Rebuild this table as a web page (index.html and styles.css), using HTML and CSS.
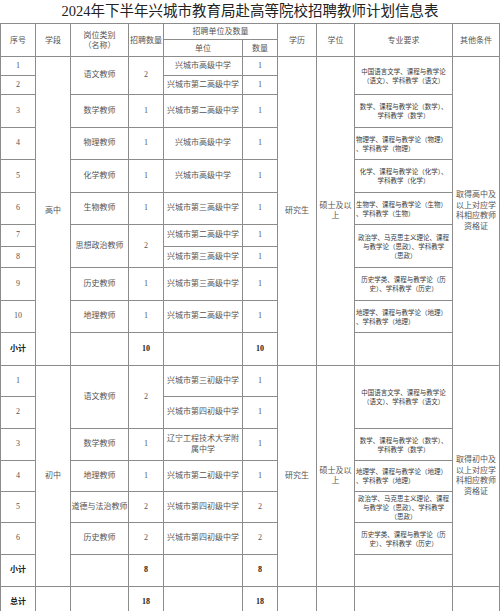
FILE: index.html
```html
<!DOCTYPE html>
<html lang="zh-CN">
<head>
<meta charset="utf-8">
<title>2024年下半年兴城市教育局赴高等院校招聘教师计划信息表</title>
<link rel="stylesheet" href="styles.css">
</head>
<body>
<div class="title">2024年下半年兴城市教育局赴高等院校招聘教师计划信息表</div>
<table class="plan">
  <colgroup>
    <col class="c-no"><col class="c-stage"><col class="c-post"><col class="c-num"><col class="c-unit"><col class="c-cnt"><col class="c-edu"><col class="c-deg"><col class="c-major"><col class="c-other">
  </colgroup>
  <thead>
    <tr class="h16">
      <th rowspan="2">序号</th>
      <th rowspan="2">学段</th>
      <th rowspan="2">岗位类别<br>（名称）</th>
      <th rowspan="2">招聘数量</th>
      <th colspan="2">招聘单位及数量</th>
      <th rowspan="2">学历</th>
      <th rowspan="2">学位</th>
      <th rowspan="2">专业要求</th>
      <th rowspan="2">其他条件</th>
    </tr>
    <tr class="h17">
      <th>单位</th>
      <th>数量</th>
    </tr>
  </thead>
  <tbody>
    <tr class="h19">
      <td>1</td>
      <td rowspan="11">高中</td>
      <td rowspan="2">语文教师</td>
      <td rowspan="2">2</td>
      <td>兴城市高级中学</td>
      <td>1</td>
      <td rowspan="11">研究生</td>
      <td rowspan="11">硕士及以<br>上</td>
      <td rowspan="2" class="major">中国语言文学、课程与教学论<br>（语文）、学科教学（语文）</td>
      <td rowspan="11">取得高中及<br>以上对应学<br>科相应教师<br>资格证</td>
    </tr>
    <tr class="h19">
      <td>2</td>
      <td>兴城市第二高级中学</td>
      <td>1</td>
    </tr>
    <tr class="h33">
      <td>3</td>
      <td>数学教师</td>
      <td>1</td>
      <td>兴城市第二高级中学</td>
      <td>1</td>
      <td class="major">数学、课程与教学论（数学）、<br>学科教学（数学）</td>
    </tr>
    <tr class="h32">
      <td>4</td>
      <td>物理教师</td>
      <td>1</td>
      <td>兴城市高级中学</td>
      <td>1</td>
      <td class="major left">物理学、课程与教学论（物理）<br>、学科教学（物理）</td>
    </tr>
    <tr class="h33">
      <td>5</td>
      <td>化学教师</td>
      <td>1</td>
      <td>兴城市高级中学</td>
      <td>1</td>
      <td class="major">化学、课程与教学论（化学）、<br>学科教学（化学）</td>
    </tr>
    <tr class="h32">
      <td>6</td>
      <td>生物教师</td>
      <td>1</td>
      <td>兴城市第三高级中学</td>
      <td>1</td>
      <td class="major left">生物学、课程与教学论（生物）<br>、学科教学（生物）</td>
    </tr>
    <tr class="h22">
      <td>7</td>
      <td rowspan="2">思想政治教师</td>
      <td rowspan="2">2</td>
      <td>兴城市第二高级中学</td>
      <td>1</td>
      <td rowspan="2" class="major">政治学、马克思主义理论、课程<br>与教学论（思政）、学科教学<br>（思政）</td>
    </tr>
    <tr class="h21">
      <td>8</td>
      <td>兴城市第三高级中学</td>
      <td>1</td>
    </tr>
    <tr class="h33">
      <td>9</td>
      <td>历史教师</td>
      <td>1</td>
      <td>兴城市第三高级中学</td>
      <td>1</td>
      <td class="major">历史学类、课程与教学论（历<br>史）、学科教学（历史）</td>
    </tr>
    <tr class="h32">
      <td>10</td>
      <td>地理教师</td>
      <td>1</td>
      <td>兴城市第二高级中学</td>
      <td>1</td>
      <td class="major left">地理学、课程与教学论（地理）<br>、学科教学（地理）</td>
    </tr>
    <tr class="h33 sum">
      <td>小计</td>
      <td></td>
      <td>10</td>
      <td></td>
      <td>10</td>
      <td></td>
    </tr>
    <tr class="h31">
      <td>1</td>
      <td rowspan="7">初中</td>
      <td rowspan="2">语文教师</td>
      <td rowspan="2">2</td>
      <td>兴城市第三初级中学</td>
      <td>1</td>
      <td rowspan="7">研究生</td>
      <td rowspan="7">硕士及以<br>上</td>
      <td rowspan="2" class="major">中国语言文学、课程与教学论<br>（语文）、学科教学（语文）</td>
      <td rowspan="7">取得初中及<br>以上对应学<br>科相应教师<br>资格证</td>
    </tr>
    <tr class="h32">
      <td>2</td>
      <td>兴城市第四初级中学</td>
      <td>1</td>
    </tr>
    <tr class="h32">
      <td>3</td>
      <td>数学教师</td>
      <td>1</td>
      <td>辽宁工程技术大学附<br>属中学</td>
      <td>1</td>
      <td class="major">数学、课程与教学论（数学）、<br>学科教学（数学）</td>
    </tr>
    <tr class="h31">
      <td>4</td>
      <td>地理教师</td>
      <td>1</td>
      <td>兴城市第二初级中学</td>
      <td>1</td>
      <td class="major left">地理学、课程与教学论（地理）<br>、学科教学（地理）</td>
    </tr>
    <tr class="h31">
      <td>5</td>
      <td>道德与法治教师</td>
      <td>2</td>
      <td>兴城市第四初级中学</td>
      <td>2</td>
      <td class="major">政治学、马克思主义理论、课程<br>与教学论（思政）、学科教学<br>（思政）</td>
    </tr>
    <tr class="h32">
      <td>6</td>
      <td>历史教师</td>
      <td>2</td>
      <td>兴城市第四初级中学</td>
      <td>2</td>
      <td class="major">历史学类、课程与教学论（历<br>史）、学科教学（历史）</td>
    </tr>
    <tr class="h32 sum">
      <td>小计</td>
      <td></td>
      <td>8</td>
      <td></td>
      <td>8</td>
      <td></td>
    </tr>
    <tr class="h32 sum">
      <td>总计</td>
      <td></td>
      <td></td>
      <td>18</td>
      <td></td>
      <td>18</td>
      <td></td>
      <td></td>
      <td></td>
      <td></td>
    </tr>
  </tbody>
</table>
</body>
</html>
```
FILE: styles.css
```css
html, body {
  margin: 0;
  padding: 0;
  background: #ffffff;
}

body {
  width: 500px;
  overflow: hidden;
}

.title {
  height: 23px;
  font-family: "Liberation Serif", "Noto Sans CJK SC", serif;
  font-size: 14.5px;
  line-height: 23px;
  text-align: center;
  color: #222222;
  white-space: nowrap;
}

.plan {
  border-collapse: collapse;
  table-layout: fixed;
  width: 500px;
  font-family: "Liberation Serif", "Noto Sans CJK SC", serif;
  font-size: 8px;
  line-height: 10.5px;
  color: #555555;
}

.plan th,
.plan td {
  border: 1px solid #8c8c8c;
  padding: 0;
  text-align: center;
  vertical-align: middle;
  white-space: nowrap;
  overflow: hidden;
}

.plan th {
  font-family: "Noto Sans CJK SC", sans-serif;
  font-weight: normal;
  color: #555555;
}

.c-no { width: 35px; }
.c-stage { width: 35px; }
.c-post { width: 58px; }
.c-num { width: 35px; }
.c-unit { width: 79px; }
.c-cnt { width: 35px; }
.c-edu { width: 39px; }
.c-deg { width: 38px; }
.c-major { width: 98px; }
.c-other { width: 47px; }

.plan td.major {
  font-family: "Noto Sans CJK SC", sans-serif;
  font-size: 6.5px;
  line-height: 9px;
  color: #3a3a3a;
}

.plan td.left {
  text-align: left;
  padding-left: 1px;
}

.sum td {
  font-weight: bold;
  color: #222222;
}

.h16 { height: 16px; }
.h17 { height: 17px; }
.h19 { height: 19px; }
.h21 { height: 21px; }
.h22 { height: 22px; }
.h31 { height: 31px; }
.h32 { height: 32px; }
.h33 { height: 33px; }
```
